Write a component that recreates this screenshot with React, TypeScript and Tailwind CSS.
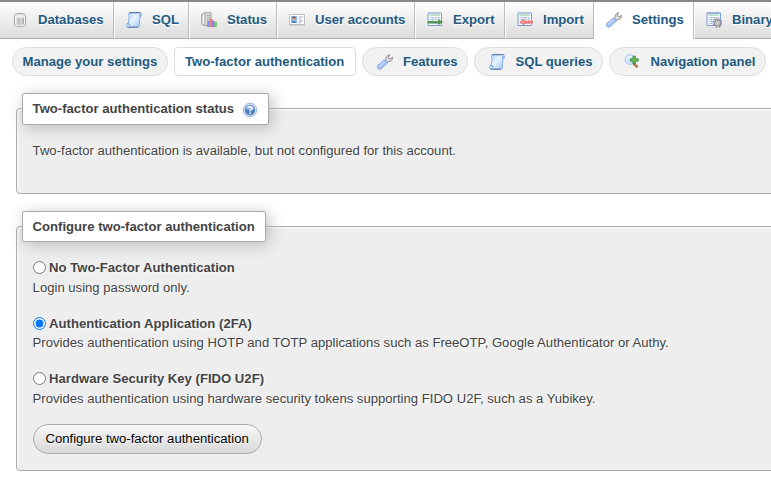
import type { ReactNode } from "react";

const IC = "block h-4 w-4 shrink-0";

function Database() {
  return (
    <svg className={IC} viewBox="0 0 16 16">
      <defs>
        <linearGradient id="db" x1="0" x2="1">
          <stop offset="0" stopColor="#e9e9e9" />
          <stop offset=".35" stopColor="#b5b5b5" />
          <stop offset=".6" stopColor="#d8d8d8" />
          <stop offset="1" stopColor="#aaa" />
        </linearGradient>
      </defs>
      <path d="M2.500 4c0-2 2-2.500 5.500-2.500s5.500.5 5.500 2.500v8c0 2-2 2.500-5.500 2.500S2.500 14 2.500 12z" fill="#fafafa" stroke="#a2a2a2" />
      <path d="M4 5.500c2 1 6 1 8 0V12c-2 1.500-6 1.500-8 0z" fill="url(#db)" />
      <ellipse cx="8" cy="4" rx="4" ry="1.500" fill="#f3f3f3" stroke="#ccc" strokeWidth=".6" />
    </svg>
  );
}

function Scroll() {
  return (
    <svg className={IC} viewBox="0 0 16 16">
      <defs>
        <linearGradient id="scr" x1="0" x2="1" y2="1">
          <stop offset="0" stopColor="#b5d4f6" />
          <stop offset=".45" stopColor="#e6f2ff" />
          <stop offset="1" stopColor="#9fc5f3" />
        </linearGradient>
      </defs>
      <path d="M3.300.7H14.500c1.300.3 1.300 2.700.4 3.800h-1L13.300 13c0 1.300-.5 2.200-1.500 2.200H1.300C.4 14.400.4 12.600 1.100 11.500h1.100L3.200 4.200C2.300 3.200 2.400 1.300 3.300.7z" fill="url(#scr)" stroke="#6c9edf" strokeWidth=".8" />
      <path d="M3.300.7H14.500" stroke="#47678f" strokeWidth=".9" />
      <path d="M1.500 12h2.200v1.500" fill="none" stroke="#4a86e0" strokeWidth=".9" />
      <path d="M13.900 2v2.200" stroke="#4a86e0" />
      <path d="M1.500 15.200h10.300" stroke="#486c9e" strokeWidth=".9" />
    </svg>
  );
}

function Status() {
  return (
    <svg className={IC} viewBox="0 0 16 16">
      <path d="M.7 2.500 4 .7h6v11L8 13.500H3L.7 12z" fill="#dcdcdc" stroke="#999" strokeWidth=".9" />
      <path d="M4 2v11M5.500 3.500H9M5.500 5.500H9M5.500 7.500H8" stroke="#a5a5a5" strokeWidth=".9" />
      <path d="M2.400 3v9" stroke="#fafafa" />
      <path d="M6.500 9.200h2.400v5.500H6.500z" fill="#75a2ff" stroke="#4773df" strokeWidth=".4" />
      <path d="M8.800 7h2.400v7.700H8.800z" fill="#ff8c87" stroke="#e8504b" strokeWidth=".4" />
      <path d="M11.100 9h2.400v5.700h-2.400z" fill="#8a82ff" stroke="#b546dc" strokeWidth=".4" />
      <path d="M13.400 10.200h2.300v4.500h-2.300z" fill="#70dc76" stroke="#3fae4b" strokeWidth=".4" />
    </svg>
  );
}

function Card() {
  return (
    <svg className={IC} viewBox="0 0 16 16">
      <path d="M.5 2.500h15v10H.5z" fill="#fff" stroke="#bdc0c6" />
      <path d="M0 13h16" stroke="#bbb" />
      <path d="M2 4h6v7H2z" fill="#8ebaf0" />
      <circle cx="5" cy="6.700" r="1.600" fill="#e1a876" />
      <path d="M3.400 6.200c0-2.200 3.200-2.200 3.200 0" fill="#66503d" />
      <path d="M2.500 11c.3-2.600 4.400-2.600 5 0z" fill="#5685c7" />
      <path d="M9.500 5H14M9.500 7h2.800M9.500 9H14M9.500 10.800H12" stroke="#a5b1c5" />
    </svg>
  );
}

function Sheet() {
  return (
    <>
      <path d="M1 1h13.500v12.500H1z" fill="#f8fbff" stroke="#7c9bd0" />
      <path d="M2.500 3h10.500" stroke="#8bc391" />
      <path d="M2.500 5.500h10.500M2.500 7.500h10.500M2.500 9.500h10.500M2.500 11.500h10.500M5.500 5v7M8.500 5v7M11.500 5v7" stroke="#a6bddd" strokeWidth=".7" />
    </>
  );
}

function Export() {
  return (
    <svg className={IC} viewBox="0 0 16 16">
      <Sheet />
      <path d="M1 9.500h10.500V7.800l4 2.200-4 2.500v-1.500H1z" fill="#4b8e3e" stroke="#2e7628" strokeWidth=".5" />
      <path d="M2 10.200h12" stroke="#75b863" strokeWidth=".6" />
    </svg>
  );
}

function Import() {
  return (
    <svg className={IC} viewBox="0 0 16 16">
      <Sheet />
      <path d="M15.500 9.300H7V7.400l-4 2.700 4 2.700v-1.900h8.500z" fill="#ffb0a8" stroke="#f04d49" strokeWidth=".8" />
    </svg>
  );
}

function Wrench() {
  return (
    <svg className={IC} viewBox="0 0 16 16">
      <path d="M8 7.500 9 6c-.5-2.500 1-5 3.700-5.200L11.500 3l.6 1.500 1.500.3 1.900-1.600c.4 2.800-2 4.800-4.500 4.600L9.500 9z" fill="#ddd" stroke="#858585" strokeWidth=".9" />
      <path d="M7.200 5.900 1 11.200c-2.100 2.500 1.100 5.400 3.600 3.100l6-5.500z" fill="#a7c4fa" stroke="#7394dd" strokeWidth=".8" />
      <path d="m7.300 7.600-5 4.500" stroke="#cbdcff" strokeWidth="1.200" />
    </svg>
  );
}

function Binary() {
  return (
    <svg className={IC} viewBox="0 0 16 16">
      <Sheet />
      <path d="M1 1h13.500" stroke="#6993db" strokeWidth=".8" />
      <circle cx="11.500" cy="11" r="4.200" fill="none" stroke="#888" strokeWidth="1.300" strokeDasharray="1.900 1.400" />
      <circle cx="11.500" cy="11" r="2.900" fill="#ddd" stroke="#949494" strokeWidth="1.100" />
      <circle cx="11.500" cy="11" r="1.200" fill="#fff" stroke="#888" strokeWidth=".6" />
    </svg>
  );
}

function Navigation() {
  return (
    <svg className={IC} viewBox="0 0 16 16">
      <path d="m9.500 9.500 4 3.500" stroke="#8f6736" strokeWidth="2.400" />
      <path d="m10 9.500 3.300 3" stroke="#dca75e" />
      <circle cx="6" cy="5.500" r="4.900" fill="#cce5fa" stroke="#a9c7e5" />
      <path d="M3 5.500c0-2.200 2-3.500 4.300-2.800" fill="none" stroke="#fff" />
      <path d="M9 2.200h2.300v2.600h2.900v2.400h-2.900v2.600H9V7.200H6.500V4.800H9z" fill="#71bd5a" stroke="#2f7f34" strokeWidth=".8" />
    </svg>
  );
}

function Help() {
  return (
    <svg className="block h-4 w-4" viewBox="0 0 16 16">
      <circle cx="8" cy="8" r="6.800" fill="#d6e3f3" stroke="#8ba8ce" strokeWidth=".8" />
      <circle cx="8" cy="8" r="5.200" fill="#4d7fbe" />
      <path d="M3.500 7a4.600 4.600 0 0 1 9 0c-2 1.300-7 1.300-9 0z" fill="#86aadd" />
      <path d="M6 6.400c.1-2.400 4-2.300 4 0C10 7.700 8 7.800 8 9.400" fill="none" stroke="#fff" strokeWidth="1.500" />
      <path d="M7.200 10.500h1.600V12H7.200z" fill="#fff" />
    </svg>
  );
}

type TabProps = { icon: ReactNode; label: string; size: string; active?: boolean };

function Tab({ icon, label, size, active }: TabProps) {
  return (
    <a
      className={`flex shrink-0 items-center gap-[10px] border-r border-r-[#bbb] whitespace-nowrap ${size} ${
        active ? "bg-white pb-[2px]" : "border-b border-b-[#aaa] border-l border-l-white bg-linear-to-b from-white to-[#dcdcdc] pb-px"
      }`}
    >
      {icon}
      <span>{label}</span>
    </a>
  );
}

type PillProps = { label: string; size: string; icon?: ReactNode; active?: boolean };

function Pill({ label, size, icon, active }: PillProps) {
  return (
    <a
      className={`flex h-[29px] shrink-0 items-center border border-[#ddd] whitespace-nowrap ${size} ${
        active ? "rounded-[4px] bg-white" : "rounded-full bg-[#f2f2f2]"
      }`}
    >
      {icon}
      <span>{label}</span>
    </a>
  );
}

type OptionProps = { title: string; text: string; checked?: boolean; raised?: boolean };

function Option({ title, text, checked, raised }: OptionProps) {
  return (
    <div className="mt-4">
      <label className="flex h-5 items-center gap-[3.500px] font-bold">
        <input type="radio" name="method" defaultChecked={checked} className="m-0 mb-[2px] h-[13px] w-[13px]" />
        {title}
      </label>
      <p className={`h-5 leading-5 whitespace-nowrap ${raised ? "-mt-px" : ""}`}>{text}</p>
    </div>
  );
}

const panel =
  "ml-4 w-[790px] rounded-[4px] border border-[#aaa] bg-[#eee] pl-[15.600px] shadow-[inset_1px_1px_2px_#fff] [text-shadow:1px_1px_2px_#fff]";
const legend =
  "-ml-[10.600px] flex items-center rounded-[2px] border border-[#aaa] bg-white pl-[9.600px] font-bold whitespace-nowrap shadow-[3px_3px_15px_#bbb]";

export default function App() {
  return (
    <main className="h-[479px] w-full overflow-hidden bg-white font-['Liberation_Sans',Arial,sans-serif] text-[13.12px] leading-5 text-[#444]">
      <nav className="flex h-[39px] overflow-hidden border-t-2 border-[#888] font-bold text-[#235a81] [text-shadow:0_1px_0_#fff]">
        <Tab icon={<Database />} label="Databases" size="-ml-px w-[115px] pl-3" />
        <Tab icon={<Scroll />} label="SQL" size="w-[75px] pl-[11px]" />
        <Tab icon={<Status />} label="Status" size="w-[88px] pl-[11px]" />
        <Tab icon={<Card />} label="User accounts" size="w-[138px] pl-[11px]" />
        <Tab icon={<Export />} label="Export" size="w-[90px] pl-[11px]" />
        <Tab icon={<Import />} label="Import" size="w-[89px] pl-[11px]" />
        <Tab icon={<Wrench />} label="Settings" size="w-[100px] pl-3" active />
        <Tab icon={<Binary />} label="Binary" size="w-[110px] pl-[11px]" />
      </nav>

      <nav className="mt-2 flex gap-[6px] pl-3 font-bold text-[#235a81]">
        <Pill label="Manage your settings" size="w-[156px] pl-[9.600px]" />
        <Pill label="Two-factor authentication" size="w-[182px] pl-[10px]" active />
        <Pill icon={<Wrench />} label="Features" size="w-[106px] gap-[10px] pl-[14px]" />
        <Pill icon={<Scroll />} label="SQL queries" size="w-[129px] gap-[10.500px] pl-[14px]" />
        <Pill icon={<Navigation />} label="Navigation panel" size="w-[157px] gap-[10.500px] pl-[14px]" />
      </nav>

      <fieldset className={`${panel} mt-[17px] h-[101px]`}>
        <legend className={`${legend} h-[31.600px] w-[247px] gap-2`}>
          <span>Two-factor authentication status</span>
          <span className="pt-[3px]"><Help /></span>
        </legend>
        <p className="mt-4">Two-factor authentication is available, but not configured for this account.</p>
      </fieldset>

      <fieldset className={`${panel} mt-[17px] h-[260px]`}>
        <legend className={`${legend} h-[31px] w-[244px]`}>Configure two-factor authentication</legend>
        <Option title="No Two-Factor Authentication" text="Login using password only." />
        <Option title="Authentication Application (2FA)" text="Provides authentication using HOTP and TOTP applications such as FreeOTP, Google Authenticator or Authy." checked raised />
        <Option title="Hardware Security Key (FIDO U2F)" text="Provides authentication using hardware security tokens supporting FIDO U2F, such as a Yubikey." />
        <button className="mt-[15px] h-[30px] w-[229px] rounded-full border border-[#aaa] bg-linear-to-b from-[#f8f8f8] to-[#d8d8d8] text-black [text-shadow:0_1px_0_#fff]">
          Configure two-factor authentication
        </button>
      </fieldset>
    </main>
  );
}
